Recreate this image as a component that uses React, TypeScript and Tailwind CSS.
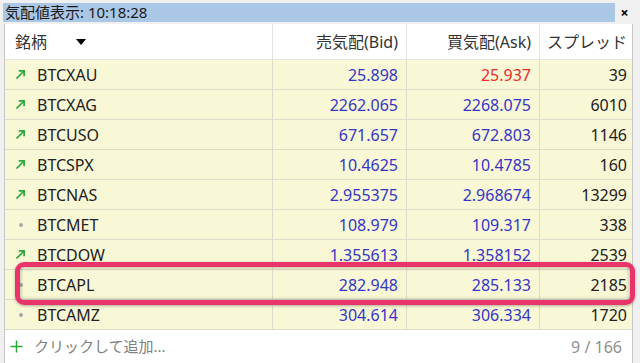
import React from 'react';

type Row = { sym: string; bid: string; ask: string; spread: string; up: boolean; askRed?: boolean };

const rows: Row[] = [
  { sym: 'BTCXAU', bid: '25.898', ask: '25.937', spread: '39', up: true, askRed: true },
  { sym: 'BTCXAG', bid: '2262.065', ask: '2268.075', spread: '6010', up: true },
  { sym: 'BTCUSO', bid: '671.657', ask: '672.803', spread: '1146', up: true },
  { sym: 'BTCSPX', bid: '10.4625', ask: '10.4785', spread: '160', up: true },
  { sym: 'BTCNAS', bid: '2.955375', ask: '2.968674', spread: '13299', up: true },
  { sym: 'BTCMET', bid: '108.979', ask: '109.317', spread: '338', up: false },
  { sym: 'BTCDOW', bid: '1.355613', ask: '1.358152', spread: '2539', up: true },
  { sym: 'BTCAPL', bid: '282.948', ask: '285.133', spread: '2185', up: false },
  { sym: 'BTCAMZ', bid: '304.614', ask: '306.334', spread: '1720', up: false },
];

const font = { fontFamily: '"Noto Sans", "Noto Sans CJK JP", sans-serif' };

function UpArrow() {
  return (
    <svg width="11" height="11" viewBox="0 0 11 11" className="shrink-0">
      <path d="M1.5 9.5 L9 2" stroke="#2aa83a" strokeWidth="1.7" fill="none" />
      <path d="M3.8 1.9 L9.1 1.9 L9.1 7.2" stroke="#2aa83a" strokeWidth="1.7" fill="none" />
    </svg>
  );
}

function Dot() {
  return (
    <span className="flex w-[11px] justify-center shrink-0">
      <span className="block h-[4px] w-[4px] rounded-full bg-[#a8a8a8]" />
    </span>
  );
}

export default function App() {
  return (
    <div className="relative h-[363px] w-[640px] overflow-hidden bg-[#f0f0f0] text-[#222]" style={font}>
      {/* title bar */}
      <div className="flex h-[22px] items-end pl-[3px]">
        <div className="flex h-[19px] w-[612px] items-center bg-[#abc7e6] pl-[2px] text-[15px] leading-none text-[#1a1a1a]">
          気配値表示: 10:18:28
        </div>
        <div className="flex h-[19px] flex-1 items-center justify-center pr-[6px]">
          <span className="text-[14px] font-bold leading-none text-black">×</span>
        </div>
      </div>

      <div className="ml-[4px] mt-[2px] w-[629px] border-l border-r border-[#c8c8c8] bg-white">
        {/* header */}
        <div className="grid h-[36px] grid-cols-[267px_134px_133px_94px] items-center border-b border-[#e4e4e4] text-[16px] text-[#333]">
          <div className="flex items-center pl-[10px]">
            <span>銘柄</span>
            <span className="ml-[29px] mt-[1px] h-0 w-0 border-l-[5px] border-r-[5px] border-t-[6px] border-l-transparent border-r-transparent border-t-black" />
          </div>
          <div className="flex h-full items-center justify-end border-l border-[#e4e4e4] pr-[8px]">売気配(Bid)</div>
          <div className="flex h-full items-center justify-end border-l border-[#e4e4e4] pr-[8px]">買気配(Ask)</div>
          <div className="flex h-full items-center justify-end border-l border-[#e4e4e4] pr-[6px]">スプレッド</div>
        </div>

        {/* rows */}
        {rows.map((r) => (
          <div
            key={r.sym}
            className="grid h-[30px] grid-cols-[267px_134px_133px_94px] items-center border-b border-[#dcdcc8] bg-[#f8f7d6] text-[16px]"
          >
            <div className="flex items-center gap-[11px] pl-[10px]">
              {r.up ? <UpArrow /> : <Dot />}
              <span className="text-[#222]">{r.sym}</span>
            </div>
            <div className="flex h-full items-center justify-end border-l border-[#dcdcc8] pr-[8px] text-[#3535c8]">{r.bid}</div>
            <div className={`flex h-full items-center justify-end border-l border-[#dcdcc8] pr-[8px] ${r.askRed ? 'text-[#ee2a2a]' : 'text-[#3535c8]'}`}>
              {r.ask}
            </div>
            <div className="flex h-full items-center justify-end border-l border-[#dcdcc8] pr-[6px] text-[#222]">{r.spread}</div>
          </div>
        ))}

        {/* footer */}
        <div className="flex h-[33px] items-center justify-between pl-[5px] pr-[10px] text-[15px]">
          <div className="flex items-center gap-[11px]">
            <svg width="13" height="13" viewBox="0 0 13 13" className="shrink-0">
              <path d="M6.5 0.5 V12.5 M0.5 6.5 H12.5" stroke="#2aa83a" strokeWidth="1.5" fill="none" />
            </svg>
            <span className="text-[#808080]">クリックして追加...</span>
          </div>
          <span className="text-[16px] text-[#909090]">9 / 166</span>
        </div>
      </div>

      {/* highlight box */}
      <div className="absolute left-[15px] top-[262px] h-[43px] w-[620px] rounded-[9px] border-[5px] border-[#e8336b] shadow-[inset_0_0_4px_rgba(0,0,0,0.35),0_1px_3px_rgba(0,0,0,0.3)]" />
    </div>
  );
}
